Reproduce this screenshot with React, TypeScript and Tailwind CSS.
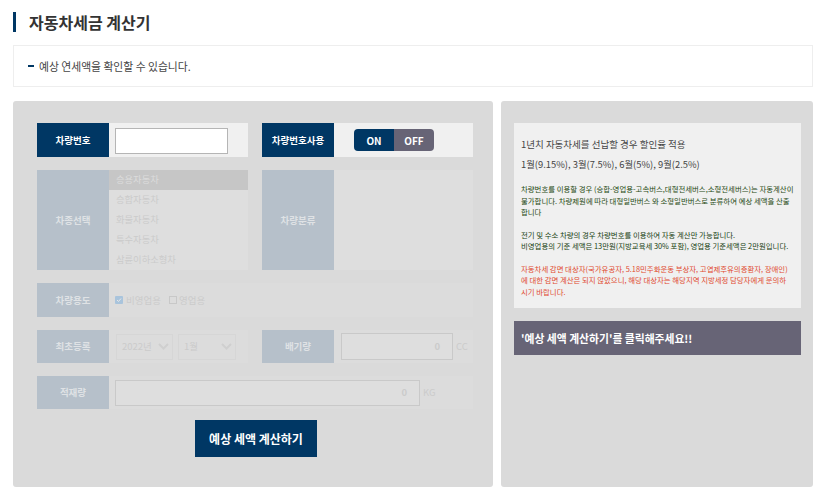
import React from "react";

function Label({ children, on = false }: { children: React.ReactNode; on?: boolean }) {
  return (
    <div className={`w-[72px] shrink-0 h-full flex items-center justify-center text-[9.5px] font-bold ${on ? "bg-[#003764] text-white" : "bg-[#b6c0ca] text-[#dfe2e5]"}`}>
      {children}
    </div>
  );
}

function Chevron() {
  return (
    <svg width="11" height="7" viewBox="0 0 11 7" fill="none" stroke="#cfcfcf" strokeWidth="2">
      <path d="M1 1 5.5 5.5 10 1" />
    </svg>
  );
}

export default function App() {
  const kinds = ["승용자동차", "승합자동차", "화물자동차", "특수자동차", "삼륜이하소형차"];
  return (
    <div className="w-[826px] h-[499px] bg-white overflow-hidden px-[13px] pt-[12px] font-['Noto_Sans_CJK_KR','Noto_Sans',sans-serif]">
      <div className="h-[20px] border-l-[3px] border-[#003764] pl-[13px] flex items-center text-[16px] leading-[20px] font-bold text-[#333]">
        <span className="-mt-[1px]">자동차세금 계산기</span>
      </div>
      <div className="mt-[13px] h-[42px] border border-[#eeeeee] flex items-center pl-[14px] text-[10.8px] text-[#444]">
        <span className="w-[6px] h-[2px] bg-[#003764] mr-[5px]" />
        예상 연세액을 확인할 수 있습니다.
      </div>

      <div className="mt-[14px] h-[386px] flex gap-[8px]">
        <div className="w-[480px] bg-[#dadada] rounded-[3px] pl-[24px] pt-[22px]">
          <div className="grid grid-cols-[211px_211px] gap-x-[14px] gap-y-[13px] grid-rows-[34px_100px_34px_33px_33px]">
            <div className="flex bg-[#f0f0f0]">
              <Label on>차량번호</Label>
              <div className="flex-1 flex items-start pt-[5px] pl-[6px]">
                <div className="w-[113px] h-[26px] bg-white border border-[#b5b5b5]" />
              </div>
            </div>
            <div className="flex bg-[#f0f0f0]">
              <Label on>차량번호사용</Label>
              <div className="flex-1 flex items-center pl-[20px]">
                <div className="w-[80px] h-[22px] rounded-[4px] overflow-hidden flex text-[10px] font-bold text-white">
                  <div className="w-[40px] bg-[#003764] flex items-center justify-center">ON</div>
                  <div className="w-[40px] bg-[#676476] flex items-center justify-center">OFF</div>
                </div>
              </div>
            </div>

            <div className="flex bg-[#dedede]">
              <Label>차종선택</Label>
              <div className="flex-1 flex flex-col text-[9.3px] text-[#cbcbcb]">
                {kinds.map((k, i) => (
                  <div key={k} className={`h-[20px] flex items-center pl-[7px] ${i === 0 ? "bg-[#c6c6c6] text-[#dcdcdc]" : ""}`}>
                    {k}
                  </div>
                ))}
              </div>
            </div>
            <div className="flex bg-[#dedede]">
              <Label>차량분류</Label>
            </div>

            <div className="col-span-2 flex bg-[#dcdcdc]">
              <Label>차량용도</Label>
              <div className="flex items-center pl-[6px] text-[9.5px] text-[#cbcbcb]">
                <span className="w-[8px] h-[8px] bg-[#a9c4dc] rounded-[1px] flex items-center justify-center mr-[3px]">
                  <svg width="6" height="6" viewBox="0 0 6 6" fill="none" stroke="#e8e8e8" strokeWidth="1"><path d="M1 3l1.5 1.5L5 1.5" /></svg>
                </span>
                비영업용
                <span className="w-[8px] h-[8px] border border-[#c8c8c8] ml-[8px] mr-[2px]" />
                영업용
              </div>
            </div>

            <div className="flex bg-[#dcdcdc]">
              <Label>최초등록</Label>
              <div className="flex-1 flex items-center pl-[7px] gap-[5px] text-[9.5px] text-[#cbcbcb]">
                <div className="w-[57px] h-[26px] border border-[#d6d6d6] flex items-center justify-between pl-[5px] pr-[3px]">2022년<Chevron /></div>
                <div className="w-[58px] h-[26px] border border-[#d6d6d6] flex items-center justify-between pl-[5px] pr-[3px]">1월<Chevron /></div>
              </div>
            </div>
            <div className="flex bg-[#dcdcdc]">
              <Label>배기량</Label>
              <div className="flex-1 flex items-center pl-[7px] text-[9.5px] text-[#cbcbcb]">
                <div className="w-[112px] h-[27px] border border-[#c9c9c9] bg-[#dedede] flex items-center justify-end pr-[12px] font-bold">0</div>
                <span className="ml-[3px]">CC</span>
              </div>
            </div>

            <div className="col-span-2 flex bg-[#dcdcdc]">
              <Label>적재량</Label>
              <div className="flex-1 flex items-center pl-[6px] text-[9.5px] text-[#cbcbcb]">
                <div className="w-[305px] h-[26px] border border-[#c9c9c9] bg-[#dedede] flex items-center justify-end pr-[12px] font-bold">0</div>
                <span className="ml-[3px]">KG</span>
              </div>
            </div>
          </div>

          <div className="mt-[11px] ml-[158px] w-[122px] h-[37px] bg-[#003764] text-white text-[12px] font-bold flex items-center justify-center">
            예상 세액 계산하기
          </div>
        </div>

        <div className="w-[312px] bg-[#dadada] rounded-[3px] pl-[13px] pr-[12px] pt-[22px]">
          <div className="h-[185px] bg-[#f0f0f0] pl-[7px] pr-[2px] pt-[14px] text-[7.4px] leading-[11.5px] whitespace-nowrap">
            <p className="text-[9.5px] leading-[14px] text-[#444]">1년치 자동차세를 선납할 경우 할인율 적용</p>
            <p className="mt-[6px] text-[9.4px] leading-[14px] text-[#444]">1월(9.15%), 3월(7.5%), 6월(5%), 9월(2.5%)</p>
            <p className="mt-[12px] text-[#1f4a12]">
              차량번호를 이용할 경우 (승합-영업용-고속버스,대형전세버스,소형전세버스)는 자동계산이
              <br />
              불가합니다. 차량제원에 따라 대형일반버스 와 소형일반버스로 분류하여 예상 세액을 산출
              <br />
              합니다
            </p>
            <p className="mt-[11px] text-[#173f10]">
              전기 및 수소 차량의 경우 차량번호를 이용하여 자동 계산만 가능합니다.
              <br />
              비영업용의 기준 세액은 13만원(지방교육세 30% 포함), 영업용 기준세액은 2만원입니다.
            </p>
            <p className="mt-[11px] text-[#e0492f]">
              자동차세 감면 대상자(국가유공자, 5.18민주화운동 부상자, 고엽제후유의증환자, 장애인)
              <br />
              에 대한 감면 계산은 되지 않았으니, 해당 대상자는 해당지역 지방세정 담당자에게 문의하
              <br />
              시기 바랍니다.
            </p>
          </div>
          <div className="mt-[13px] h-[34px] bg-[#676476] text-white text-[10.8px] font-bold flex items-center pl-[7px]">
            '예상 세액 계산하기'를 클릭해주세요!!
          </div>
        </div>
      </div>
    </div>
  );
}
